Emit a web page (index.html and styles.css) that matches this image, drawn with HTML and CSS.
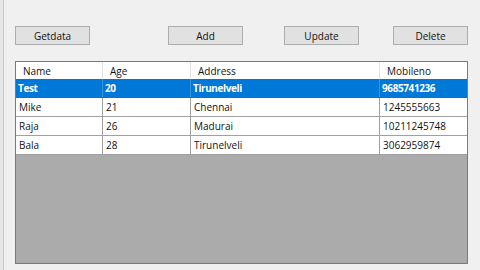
FILE: index.html
```html
<!DOCTYPE html>
<html>
<head>
<meta charset="utf-8">
<link rel="stylesheet" href="styles.css">
</head>
<body>
<div class="window">
  <div class="toolbar">
    <button class="btn b-get">Getdata</button>
    <button class="btn b-add">Add</button>
    <button class="btn b-upd">Update</button>
    <button class="btn b-del">Delete</button>
  </div>
  <div class="grid">
    <div class="row head">
      <div class="c c1">Name</div><div class="c c2">Age</div><div class="c c3">Address</div><div class="c c4">Mobileno</div>
    </div>
    <div class="row sel">
      <div class="c c1">Test</div><div class="c c2">20</div><div class="c c3">Tirunelveli</div><div class="c c4">9685741236</div>
    </div>
    <div class="row">
      <div class="c c1">Mike</div><div class="c c2">21</div><div class="c c3">Chennai</div><div class="c c4">1245555663</div>
    </div>
    <div class="row">
      <div class="c c1">Raja</div><div class="c c2">26</div><div class="c c3">Madurai</div><div class="c c4">10211245748</div>
    </div>
    <div class="row">
      <div class="c c1">Bala</div><div class="c c2">28</div><div class="c c3">Tirunelveli</div><div class="c c4">3062959874</div>
    </div>
  </div>
</div>
</body>
</html>
```

FILE: styles.css
```css
html, body {
  margin: 0;
  padding: 0;
  width: 480px;
  height: 270px;
  background: #f0f0f0;
  font-family: "Open Sans", "Noto Sans", "DejaVu Sans", sans-serif;
  font-size: 10px;
  color: #111;
  overflow: hidden;
}
.window {
  height: 270px;
  border-left: 3px solid #e6e6e6;
  box-sizing: border-box;
  position: relative;
}
.window::before {
  content: "";
  display: block;
  position: absolute;
  left: 0;
  top: 0;
  width: 1px;
  height: 270px;
  background: #c9c9c9;
}
.toolbar {
  display: flex;
  padding-top: 26px;
  padding-left: 12px;
}
.btn {
  width: 75px;
  height: 19px;
  box-sizing: border-box;
  border: 1px solid #adadad;
  background: #e1e1e1;
  font-family: inherit;
  font-size: 10px;
  color: #111;
  padding: 0;
  margin: 0;
  line-height: 16px;
}
.b-add { margin-left: 78px; }
.b-upd { margin-left: 41px; }
.b-del { margin-left: 34px; }
.grid {
  margin-top: 16px;
  margin-left: 12px;
  width: 453px;
  height: 203px;
  box-sizing: border-box;
  border: 1px solid #7a7a7a;
  background: #ababab;
}
.row {
  display: grid;
  grid-template-columns: 87px 88px 189px 87px;
  height: 19px;
  background: #fff;
  border-bottom: 1px solid #a0a0a0;
  box-sizing: border-box;
}
.row.head {
  height: 17px;
  border-bottom: none;
}
.c {
  border-right: 1px solid #a0a0a0;
  padding-left: 3px;
  line-height: 18px;
  white-space: nowrap;
  overflow: hidden;
}
.c4 { border-right: none; }
.head .c {
  padding-left: 7px;
  line-height: 18px;
  border-right-color: #e3e3e3;
}
.sel {
  background: #0078d7;
  color: #fff;
  font-weight: 700;
  letter-spacing: -0.4px;
  border-bottom-color: #0078d7;
}
.sel .c {
  border-right-color: #3a94dd;
  padding-left: 2px;
}
```
